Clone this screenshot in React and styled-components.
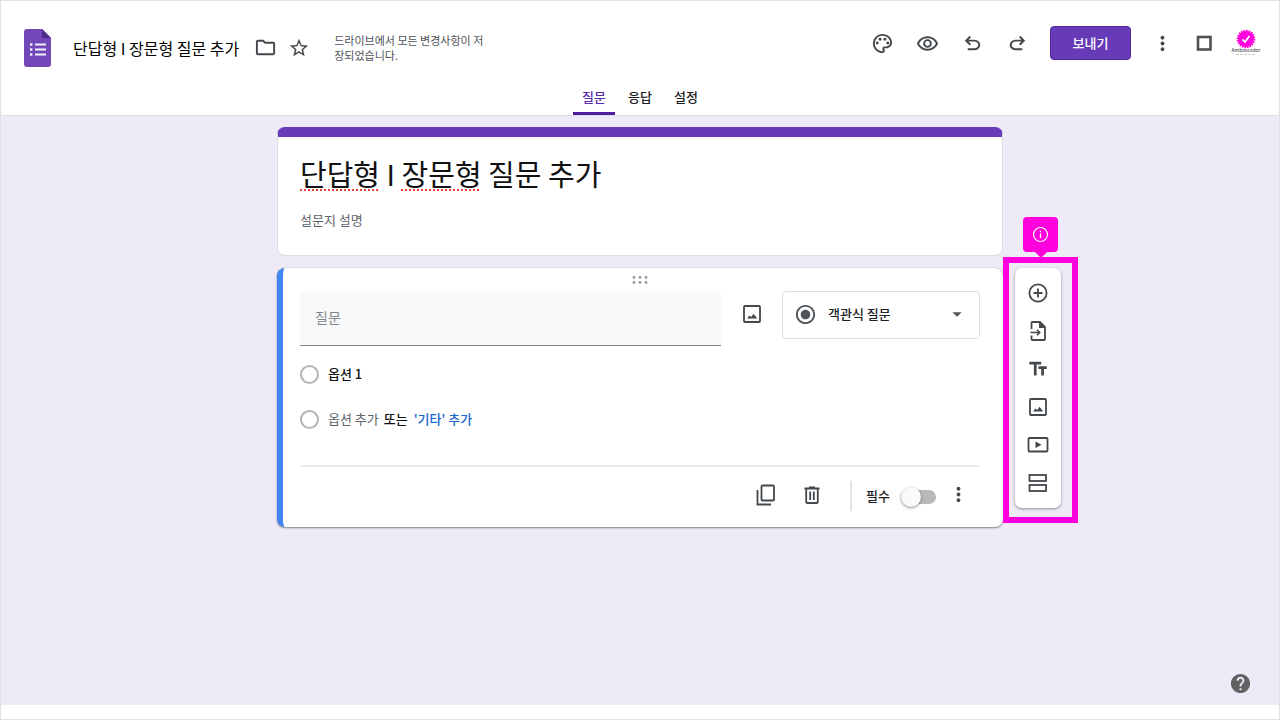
import React, { useState } from 'react';
import styled, { createGlobalStyle } from 'styled-components';
import {
  MdOutlinePalette,
  MdOutlineRemoveRedEye,
  MdOutlineFolder,
  MdStarBorder,
  MdMoreVert,
  MdTextFields,
  MdHelp,
  MdArrowDropDown,
  MdRadioButtonChecked,
} from 'react-icons/md';

const GlobalStyle = createGlobalStyle`
  * {
    box-sizing: border-box;
  }

  body {
    margin: 0;
    font-family: 'Noto Sans CJK KR', 'Noto Sans', sans-serif;
    font-size: 13px;
    color: #202124;
  }

  button, input, select {
    font: inherit;
    color: inherit;
  }
`;

const Page = styled.div`
  min-height: 100vh;
  display: flex;
  flex-direction: column;
  background-color: #fff;
  border: 1px solid #e2e2e2;
  padding-bottom: 14px;
`;

const Header = styled.header`
  border-bottom: 1px solid #dddce4;
`;

const TopBar = styled.div`
  display: flex;
  justify-content: space-between;
  align-items: flex-start;
  height: 80px;
  padding: 25px 18px 0 22px;
`;

const DocInfo = styled.div`
  display: flex;
  align-items: center;
  height: 43px;
`;

const DocName = styled.span`
  margin: 0 9px 0 21px;
  font-size: 16px;
  line-height: 24px;
  color: #000;
  white-space: nowrap;
`;

const SavedText = styled.p`
  width: 156px;
  margin: 0 0 0 18px;
  font-size: 11px;
  line-height: 15px;
  color: #4d5156;
  word-break: break-all;
`;

const Actions = styled.div`
  display: flex;
  align-items: center;
  height: 34px;
`;

const IconButton = styled.button`
  display: flex;
  align-items: center;
  justify-content: center;
  width: ${(props) => props.$width || 34}px;
  height: 34px;
  padding: 0;
  border: none;
  background-color: transparent;
  color: #43484d;
  cursor: pointer;
`;

const SendButton = styled.button`
  width: 81px;
  height: 34px;
  margin: 0 11px 0 10px;
  padding: 0 0 2px;
  border: 1px solid #55289f;
  border-radius: 4px;
  background-color: #673ab7;
  color: #fff;
  font-weight: 500;
  cursor: pointer;
`;

const Avatar = styled.svg`
  margin-left: 6px;
`;

const Tabs = styled.nav`
  display: flex;
  justify-content: center;
  gap: 4px;
`;

const Tab = styled.button`
  width: 42px;
  height: 34px;
  padding: 1px 0 0;
  border: none;
  border-bottom: 3px solid ${(props) => (props.$active ? '#4c1d9c' : 'transparent')};
  border-radius: 2px 2px 0 0;
  background-color: transparent;
  color: ${(props) => (props.$active ? '#5a2bab' : '#202124')};
  font-weight: 500;
  line-height: 20px;
  cursor: pointer;
`;

const Canvas = styled.main`
  flex: 1;
  display: grid;
  grid-template-columns: 1fr minmax(0, 726px) 1fr;
  align-items: start;
  background-color: #eeeaf7;
`;

const FormColumn = styled.div`
  grid-column: 2;
  display: flex;
  flex-direction: column;
  gap: 12px;
  padding-top: 11px;
`;

const TitleCard = styled.section`
  height: 129px;
  padding: 16px 22px 0;
  border: 1px solid #dfdce8;
  border-top: 10px solid #673ab7;
  border-radius: 8px;
  background-color: #fff;
`;

const FormTitle = styled.h1`
  margin: 0 0 16px;
  font-size: 29px;
  font-weight: 400;
  line-height: 40px;
  color: #111;
`;

const Misspelled = styled.span`
  text-decoration: underline dotted #f04438 2px;
  text-underline-offset: 3px;
  text-decoration-skip-ink: none;
`;

const Description = styled.input`
  display: block;
  width: 100%;
  height: 20px;
  padding: 0;
  border: none;
  outline: none;

  &::placeholder {
    color: #5f6368;
    opacity: 1;
  }
`;

const QuestionCard = styled.section`
  padding: 8px 23px 14px 17px;
  border-left: 6px solid #4285f4;
  border-radius: 8px;
  background-color: #fff;
  box-shadow: 0 1px 2px rgba(60, 64, 67, 0.6), 0 0 1px rgba(60, 64, 67, 0.3);
`;

const Grip = styled.svg`
  display: block;
  margin: 0 auto 7px;
`;

const QuestionRow = styled.div`
  display: flex;
  align-items: flex-start;
`;

const QuestionInput = styled.input`
  flex: 1;
  min-width: 0;
  height: 55px;
  padding: 0 15px 3px;
  border: none;
  border-bottom: 1px solid #80868b;
  outline: none;
  background-color: #f8f9fa;
  font-size: 14px;

  &::placeholder {
    color: #80868b;
    opacity: 1;
  }
`;

const AddImage = styled(IconButton)`
  height: 46px;
`;

const SelectWrap = styled.div`
  position: relative;
  width: 198px;
  color: #4f5459;
`;

const TypeSelect = styled.select`
  appearance: none;
  display: block;
  width: 100%;
  height: 48px;
  padding: 0 40px 3px 45px;
  border: 1px solid #dadce0;
  border-radius: 4px;
  background-color: #fff;
  color: #202124;
  font-weight: 500;
`;

const SelectIcon = styled.span`
  position: absolute;
  top: 0;
  ${(props) => props.$side}: 12px;
  display: flex;
  align-items: center;
  height: 46px;
  pointer-events: none;
`;

const OptionRow = styled.div`
  display: flex;
  align-items: center;
  height: 20px;
  margin-top: ${(props) => props.$top}px;
  line-height: 20px;
`;

const Radio = styled.input`
  appearance: none;
  width: 19px;
  height: 19px;
  margin: 0 9px 0 0;
  border: 2px solid #b4b4b4;
  border-radius: 50%;
  background-color: #fff;
`;

const OptionLabel = styled.label`
  font-weight: 500;
  color: #111;
`;

const TextButton = styled.button`
  padding: 0;
  border: none;
  background-color: transparent;
  color: ${(props) => (props.$link ? '#1967d2' : '#5f6368')};
  font-weight: ${(props) => (props.$link ? 500 : 400)};
  line-height: 20px;
  cursor: pointer;
`;

const OrText = styled.span`
  margin: 0 6px 0 5px;
  font-weight: 500;
  color: #111;
`;

const CardFooter = styled.div`
  display: flex;
  align-items: center;
  justify-content: flex-end;
  height: 48px;
  margin-top: 36px;
  padding: 12px 5px 0 0;
  border-top: 2px solid #ebebeb;
`;

const FooterButton = styled(IconButton)`
  padding-bottom: 3px;
`;

const Separator = styled.span`
  width: 2px;
  height: 30px;
  margin: 0 14px 0 15px;
  background-color: #e4e4e4;
`;

const RequiredLabel = styled.label`
  display: flex;
  align-items: center;
  gap: 11px;
  margin-right: 5px;
  font-weight: 500;
  line-height: 18px;
`;

const Toggle = styled.input`
  appearance: none;
  display: flex;
  align-items: center;
  width: 35px;
  height: 14px;
  margin: 2px 0 0;
  border-radius: 7px;
  background-color: #b9b9b9;
  cursor: pointer;

  &::before {
    content: '';
    width: 20px;
    height: 20px;
    border-radius: 50%;
    background-color: #fafafa;
    box-shadow: 0 1px 3px rgba(0, 0, 0, 0.45);
  }

  &:checked {
    justify-content: flex-end;
    background-color: #b39ddb;
  }
`;

const Side = styled.aside`
  display: flex;
  flex-direction: column;
  align-items: center;
  width: 75px;
  padding-top: 101px;
`;

const InfoBadge = styled.button`
  position: relative;
  display: flex;
  align-items: center;
  justify-content: center;
  width: 35px;
  height: 35px;
  margin-bottom: 5px;
  padding: 0;
  border: none;
  border-radius: 4px;
  background-color: #ff00dc;

  &::after {
    content: '';
    position: absolute;
    top: 100%;
    left: 12px;
    border: 6px solid transparent;
    border-top-color: #ff00dc;
    border-bottom: none;
  }
`;

const Highlight = styled.div`
  width: 100%;
  padding: 5px 11px 9px 6px;
  border: 6px solid #ff00dc;
`;

const Toolbar = styled.div`
  display: flex;
  flex-direction: column;
  align-items: center;
  padding: 6px 0;
  border-radius: 7px;
  background-color: #fff;
  box-shadow: 0 1px 3px rgba(60, 64, 67, 0.55);
`;

const ToolButton = styled(IconButton)`
  height: 38px;
`;

const Help = styled.button`
  grid-column: 3;
  align-self: end;
  justify-self: end;
  display: flex;
  margin: 0 27px 10px 0;
  padding: 0;
  border: none;
  background-color: transparent;
  color: #626264;
`;

const Logo = () => (
  <svg width="29" height="40" viewBox="0 0 29 40" aria-hidden="true">
    <path d="M4 1h15l9 9v26a3 3 0 0 1-3 3H4a3 3 0 0 1-3-3V4a3 3 0 0 1 3-3z" fill="#7248b9" />
    <path d="M19 1l9 9h-9z" fill="#4b2b83" />
    <path d="M12 16.500h11M12 21.500h11M12 26.500h11" stroke="#f4effb" strokeWidth="2.2" />
    <path d="M7 16.500h2.4M7 21.500h2.4M7 26.500h2.4" stroke="#f4effb" strokeWidth="2.4" />
  </svg>
);

const UndoIcon = () => (
  <svg width="23" height="23" viewBox="0 -960 960 960" fill="currentColor">
    <path d="M280-200v-80h284q63 0 109.5-40T720-420q0-60-46.5-100T564-560H312l104 104-56 56-200-200 200-200 56 56-104 104h252q97 0 169.5 63T800-420q0 94-72.5 157T564-200H280Z" />
  </svg>
);

const RedoIcon = () => (
  <svg width="23" height="23" viewBox="0 -960 960 960" fill="currentColor">
    <path d="M396-200q-97 0-169.5-63T154-420q0-94 72.5-157T396-640h252L544-744l56-56 200 200-200 200-56-56 104-104H396q-63 0-109.5 40T240-420q0 60 46.5 100T396-280h284v80H396Z" />
  </svg>
);

const ImageIcon = () => (
  <svg width="20" height="20" viewBox="0 0 20 20" fill="none">
    <rect x="2" y="2" width="16" height="16" rx="1" stroke="currentColor" strokeWidth="1.800" />
    <path d="M5 14.500l2.400-3 1.800 1.500 2.400-3.200 3.600 4.700z" fill="currentColor" />
  </svg>
);

const CopyIcon = () => (
  <svg width="22" height="22" viewBox="0 0 22 22" fill="none" stroke="currentColor" strokeWidth="1.8">
    <rect x="6.5" y="1.5" width="12.5" height="15" rx="1" />
    <path d="M2.5 6v14.5H16" />
  </svg>
);

const TrashIcon = () => (
  <svg width="20" height="20" viewBox="0 0 20 20" fill="none" stroke="currentColor" strokeWidth="1.8">
    <path d="M2.5 3.5h15M7 2.5h6M4.2 3.5V17a1 1 0 0 0 1 1h9.6a1 1 0 0 0 1-1V3.5M8.2 6.5V15M11.8 6.5V15" />
  </svg>
);

const AddIcon = () => (
  <svg width="22" height="22" viewBox="0 0 22 22" fill="none" stroke="currentColor" strokeWidth="1.8">
    <circle cx="11" cy="11" r="8.6" />
    <path d="M11 6.5v9M6.5 11h9" />
  </svg>
);

const ImportIcon = () => (
  <svg width="20" height="22" viewBox="0 0 20 22" fill="none" stroke="currentColor" strokeWidth="1.8">
    <path d="M3.5 9V3a1 1 0 0 1 1-1H12l5 5v12a1 1 0 0 1-1 1H4.500a1 1 0 0 1-1-1v-3.500" />
    <path d="M11 1.500V8h6.500z" fill="currentColor" stroke="none" />
    <path d="M2.500 12.500h8.500M9 9.800l2.700 2.700L9 15.200" strokeWidth="1.600" />
  </svg>
);

const VideoIcon = () => (
  <svg width="22" height="18" viewBox="0 0 22 18" fill="none">
    <rect x="1.500" y="2" width="19" height="13.500" rx="1" stroke="currentColor" strokeWidth="1.800" />
    <path d="M8.500 5.500v6.500l6-3.250z" fill="currentColor" />
  </svg>
);

const SectionIcon = () => (
  <svg width="20" height="20" viewBox="0 0 20 20" fill="none" stroke="currentColor" strokeWidth="1.8">
    <rect x="1.500" y="2" width="16.500" height="6" />
    <rect x="1.500" y="12" width="16.500" height="6" />
  </svg>
);

const SquareIcon = () => (
  <svg width="16" height="16" viewBox="0 0 16 16">
    <rect x="2" y="2" width="12.500" height="12.500" fill="none" stroke="#4d5156" strokeWidth="2.600" />
  </svg>
);

const InfoIcon = () => (
  <svg width="17" height="17" viewBox="0 0 17 17" fill="none" stroke="#fff">
    <circle cx="8.5" cy="8.5" r="7" strokeWidth="1.2" />
    <path d="M8.5 7.500v4.500M8.500 4.800v1.400" strokeWidth="1.300" />
  </svg>
);

const tools = [
  { label: '질문 추가', icon: <AddIcon /> },
  { label: '질문 가져오기', icon: <ImportIcon /> },
  { label: '제목 및 설명 추가', icon: <MdTextFields size={22} /> },
  { label: '이미지 추가', icon: <ImageIcon /> },
  { label: '동영상 추가', icon: <VideoIcon /> },
  { label: '섹션 추가', icon: <SectionIcon /> },
];

const tabs = ['질문', '응답', '설정'];

function App() {
  const [activeTab, setActiveTab] = useState('질문');
  const [required, setRequired] = useState(false);

  return (
    <Page>
      <GlobalStyle />
      <Header>
        <TopBar>
          <DocInfo>
            <Logo />
            <DocName>단답형 I 장문형 질문 추가</DocName>
            <IconButton aria-label="폴더로 이동"><MdOutlineFolder size={23} /></IconButton>
            <IconButton aria-label="별표"><MdStarBorder size={22} /></IconButton>
            <SavedText>드라이브에서 모든 변경사항이 저장되었습니다.</SavedText>
          </DocInfo>
          <Actions>
            <IconButton $width={45} aria-label="테마"><MdOutlinePalette size={23} /></IconButton>
            <IconButton $width={45} aria-label="미리보기"><MdOutlineRemoveRedEye size={23} /></IconButton>
            <IconButton $width={45} aria-label="실행취소"><UndoIcon /></IconButton>
            <IconButton $width={45} aria-label="재실행"><RedoIcon /></IconButton>
            <SendButton>보내기</SendButton>
            <IconButton $width={41} aria-label="더보기"><MdMoreVert size={23} /></IconButton>
            <IconButton $width={42} aria-label="창"><SquareIcon /></IconButton>
            <Avatar width="30" height="28" viewBox="0 0 30 28">
              <circle cx="15" cy="10" r="8" fill="#ff00dc" />
              <circle cx="15" cy="10" r="8.3" fill="none" stroke="#ff00dc" strokeWidth="2" strokeDasharray="1.6 1" />
              <path d="M11.5 10.5l2.5 2.500 4.500-6" fill="none" stroke="#fff" strokeWidth="1.800" />
              <text x="15" y="23" fontSize="5" fill="#333" textAnchor="middle">Ambassador</text>
              <path d="M5 25.500h20" stroke="#ccc" strokeWidth="1" strokeDasharray="3 1" />
            </Avatar>
          </Actions>
        </TopBar>
        <Tabs>
          {tabs.map((tab) => (
            <Tab key={tab} $active={tab === activeTab} onClick={() => setActiveTab(tab)}>
              {tab}
            </Tab>
          ))}
        </Tabs>
      </Header>

      <Canvas>
        <FormColumn>
          <TitleCard>
            <FormTitle>
              <Misspelled>단답형</Misspelled> I <Misspelled>장문형</Misspelled> 질문 추가
            </FormTitle>
            <Description type="text" aria-label="설문지 설명" placeholder="설문지 설명" />
          </TitleCard>

          <QuestionCard>
            <Grip width="16" height="8" viewBox="0 0 16 8" fill="#9a9a9a">
              {[2, 8, 14].map((x) => (
                <React.Fragment key={x}>
                  <circle cx={x} cy="1.5" r="1.4" />
                  <circle cx={x} cy="6.5" r="1.4" />
                </React.Fragment>
              ))}
            </Grip>
            <QuestionRow>
              <QuestionInput type="text" aria-label="질문" placeholder="질문" />
              <AddImage $width={61} aria-label="이미지 추가"><ImageIcon /></AddImage>
              <SelectWrap>
                <TypeSelect aria-label="질문 유형">
                  <option>객관식 질문</option>
                </TypeSelect>
                <SelectIcon $side="left"><MdRadioButtonChecked size={23} /></SelectIcon>
                <SelectIcon $side="right"><MdArrowDropDown size={22} /></SelectIcon>
              </SelectWrap>
            </QuestionRow>
            <OptionRow $top={18}>
              <Radio type="radio" name="option" id="option1" />
              <OptionLabel htmlFor="option1">옵션 1</OptionLabel>
            </OptionRow>
            <OptionRow $top={25}>
              <Radio type="radio" name="option" aria-label="옵션 추가" />
              <TextButton>옵션 추가</TextButton>
              <OrText>또는</OrText>
              <TextButton $link>'기타' 추가</TextButton>
            </OptionRow>
            <CardFooter>
              <FooterButton $width={46} aria-label="복사"><CopyIcon /></FooterButton>
              <FooterButton $width={46} aria-label="삭제"><TrashIcon /></FooterButton>
              <Separator />
              <RequiredLabel>
                필수
                <Toggle
                  type="checkbox"
                  checked={required}
                  onChange={(e) => setRequired(e.target.checked)}
                />
              </RequiredLabel>
              <FooterButton aria-label="옵션 더보기"><MdMoreVert size={23} /></FooterButton>
            </CardFooter>
          </QuestionCard>
        </FormColumn>

        <Side>
          <InfoBadge aria-label="정보"><InfoIcon /></InfoBadge>
          <Highlight>
            <Toolbar>
              {tools.map((tool) => (
                <ToolButton key={tool.label} aria-label={tool.label}>{tool.icon}</ToolButton>
              ))}
            </Toolbar>
          </Highlight>
        </Side>
        <Help aria-label="도움말"><MdHelp size={23} /></Help>
      </Canvas>
    </Page>
  );
}

export default App;
